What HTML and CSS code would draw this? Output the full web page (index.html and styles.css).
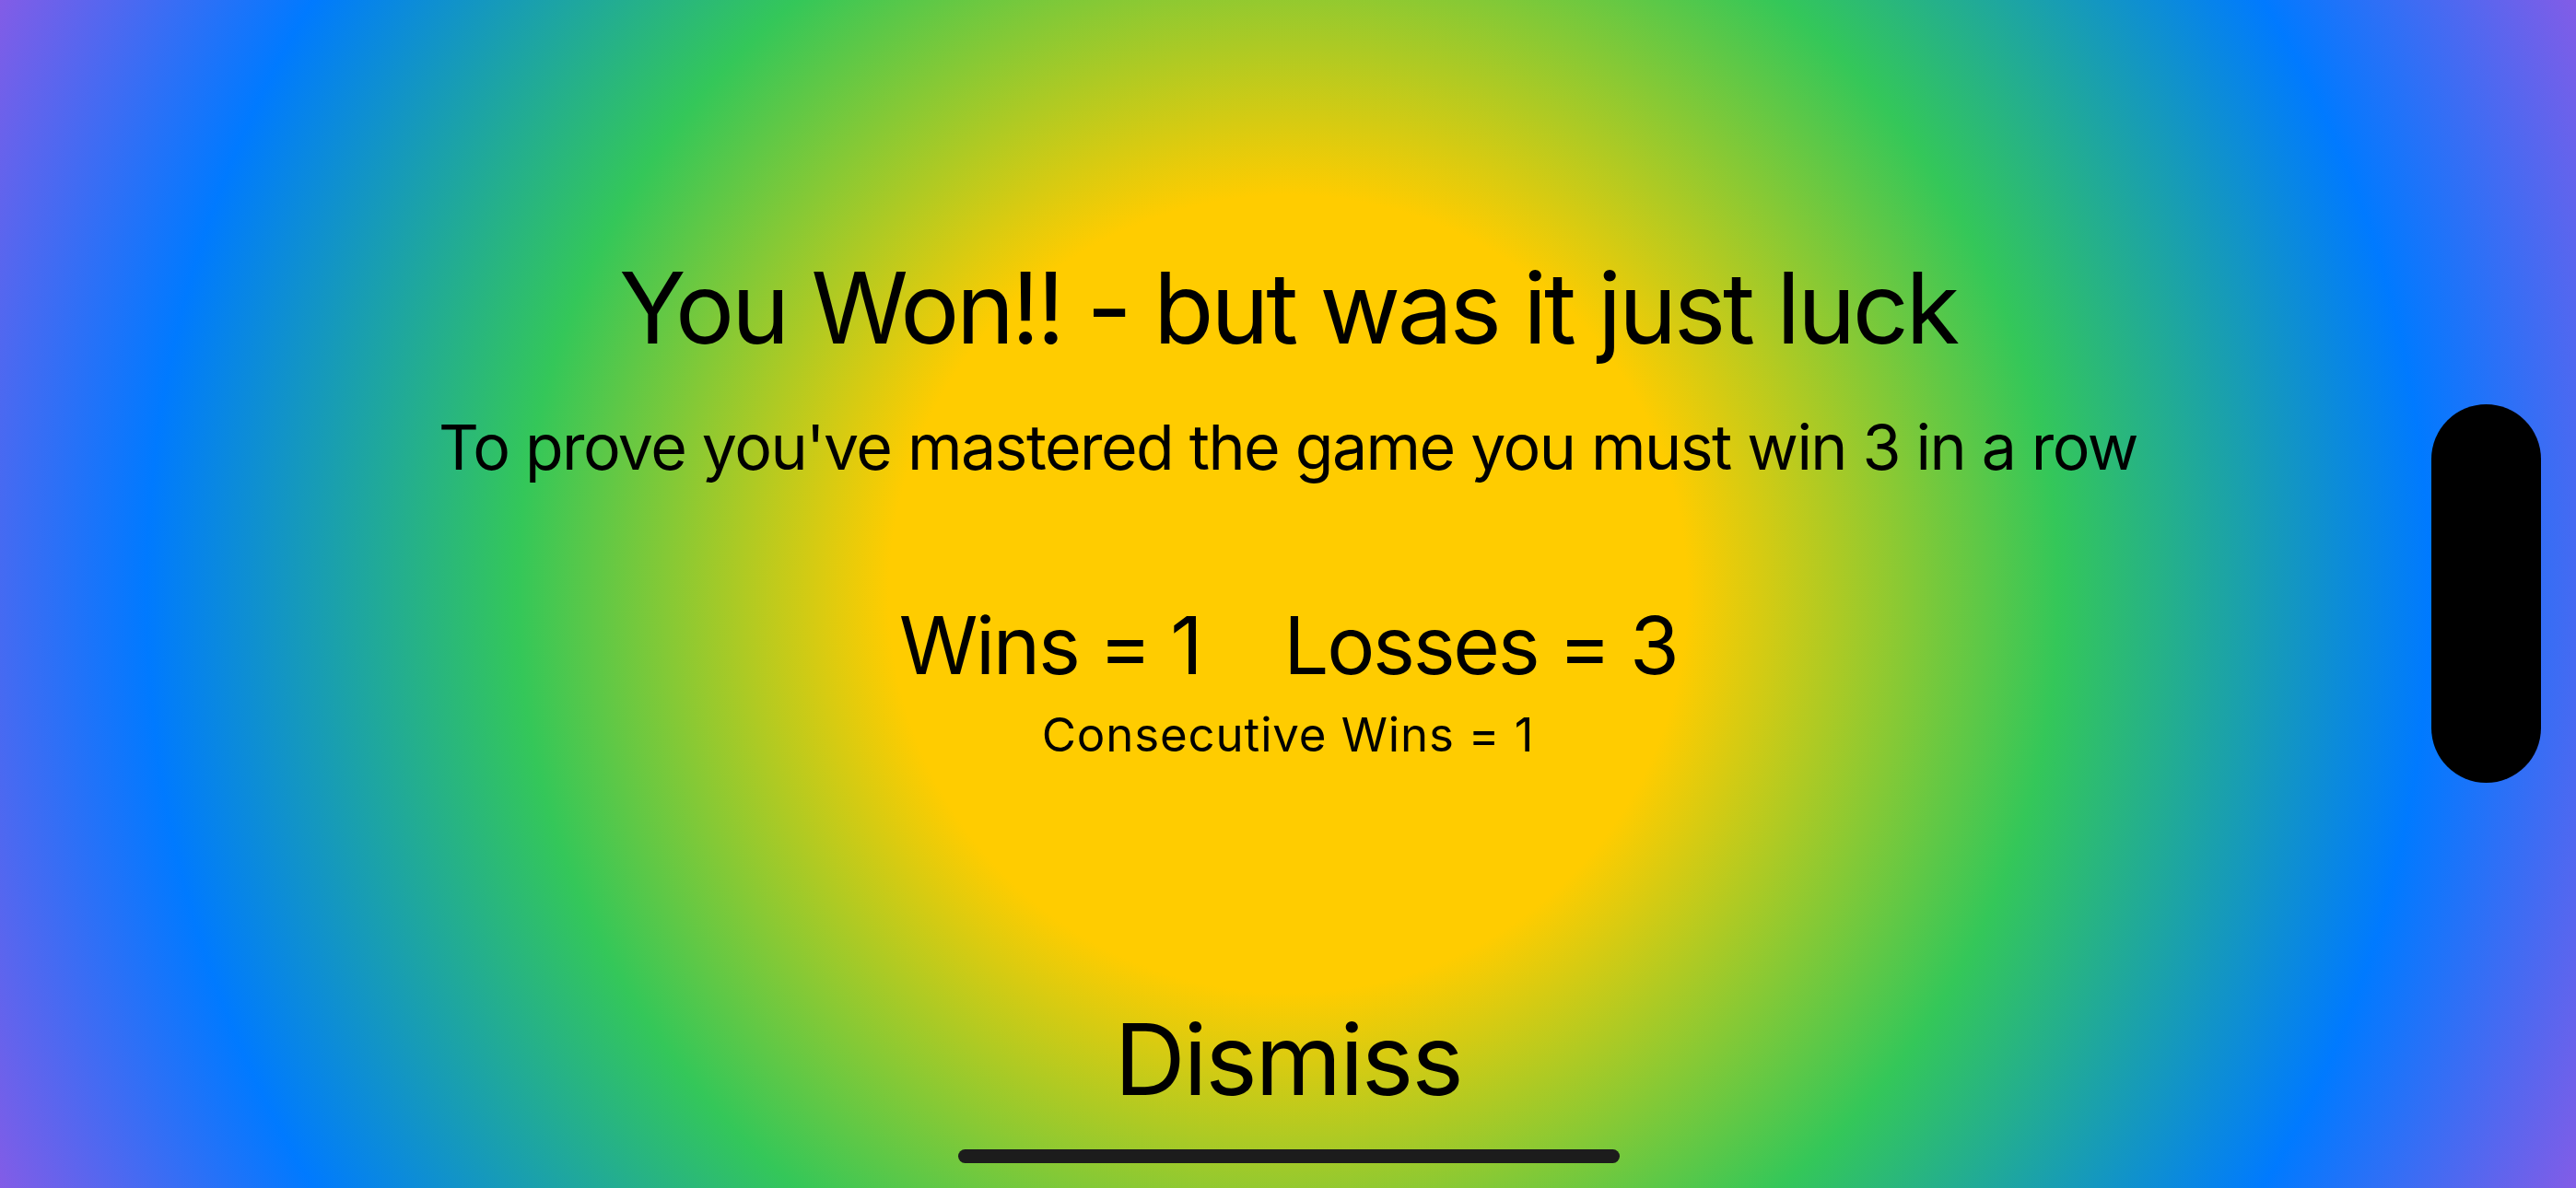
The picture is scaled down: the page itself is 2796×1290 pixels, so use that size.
FILE: index.html
```html
<!DOCTYPE html>
<html lang="en">
<head>
<meta charset="utf-8">
<title>You Won</title>
<link rel="stylesheet" href="styles.css">
</head>
<body>
<div class="screen">
  <main class="content">
    <h1 class="title">You Won!! - but was it just luck</h1>
    <p class="subtitle">To prove you've mastered the game you must win 3 in a row</p>
    <div class="stats">
      <span class="stat">Wins = 1</span>
      <span class="stat">Losses = 3</span>
    </div>
    <p class="streak">Consecutive Wins = 1</p>
    <button class="dismiss" type="button">Dismiss</button>
  </main>
  <div class="island"></div>
  <div class="home-indicator"></div>
</div>
</body>
</html>
```
FILE: styles.css
```css
html, body {
  margin: 0;
  padding: 0;
}

body {
  width: 2796px;
  height: 1290px;
  overflow: hidden;
  font-family: "Inter", "Noto Sans", "Liberation Sans", sans-serif;
  color: #000;
}

.screen {
  position: relative;
  width: 2796px;
  height: 1290px;
  background: radial-gradient(circle at 1398px 645px,
    #ffcc00 0px,
    #ffcc00 433px,
    #34c759 836px,
    #007aff 1239px,
    #af52de 1642px);
}

.content {
  display: flex;
  flex-direction: column;
  align-items: center;
  height: 100%;
  box-sizing: border-box;
  padding-top: 270px;
  padding-bottom: 76px;
}

.title {
  margin: 0;
  font-size: 107px;
  font-weight: 400;
  line-height: 1.2;
  letter-spacing: -3.35px;
  white-space: nowrap;
}

.subtitle {
  margin: 47px 0 0;
  font-size: 68px;
  line-height: 1.2;
  letter-spacing: -1.55px;
  white-space: nowrap;
}

.stats {
  display: flex;
  gap: 90px;
  margin-top: 122px;
  font-size: 87px;
  line-height: 1.2;
  letter-spacing: -2.3px;
  white-space: nowrap;
}

.streak {
  margin: 14px 0 0;
  font-size: 51px;
  line-height: 1.2;
  letter-spacing: 0.85px;
  white-space: nowrap;
}

.dismiss {
  margin-top: auto;
  padding: 0;
  border: none;
  background: none;
  font-family: inherit;
  font-size: 107px;
  line-height: 1.2;
  letter-spacing: -2.2px;
  color: #000;
  cursor: pointer;
}

.island {
  position: absolute;
  left: 2639px;
  top: 439px;
  width: 119px;
  height: 411px;
  border-radius: 60px;
  background: #000;
}

.home-indicator {
  position: absolute;
  left: 1040px;
  top: 1248px;
  width: 718px;
  height: 15px;
  border-radius: 8px;
  background: #1c1c1c;
}
```
